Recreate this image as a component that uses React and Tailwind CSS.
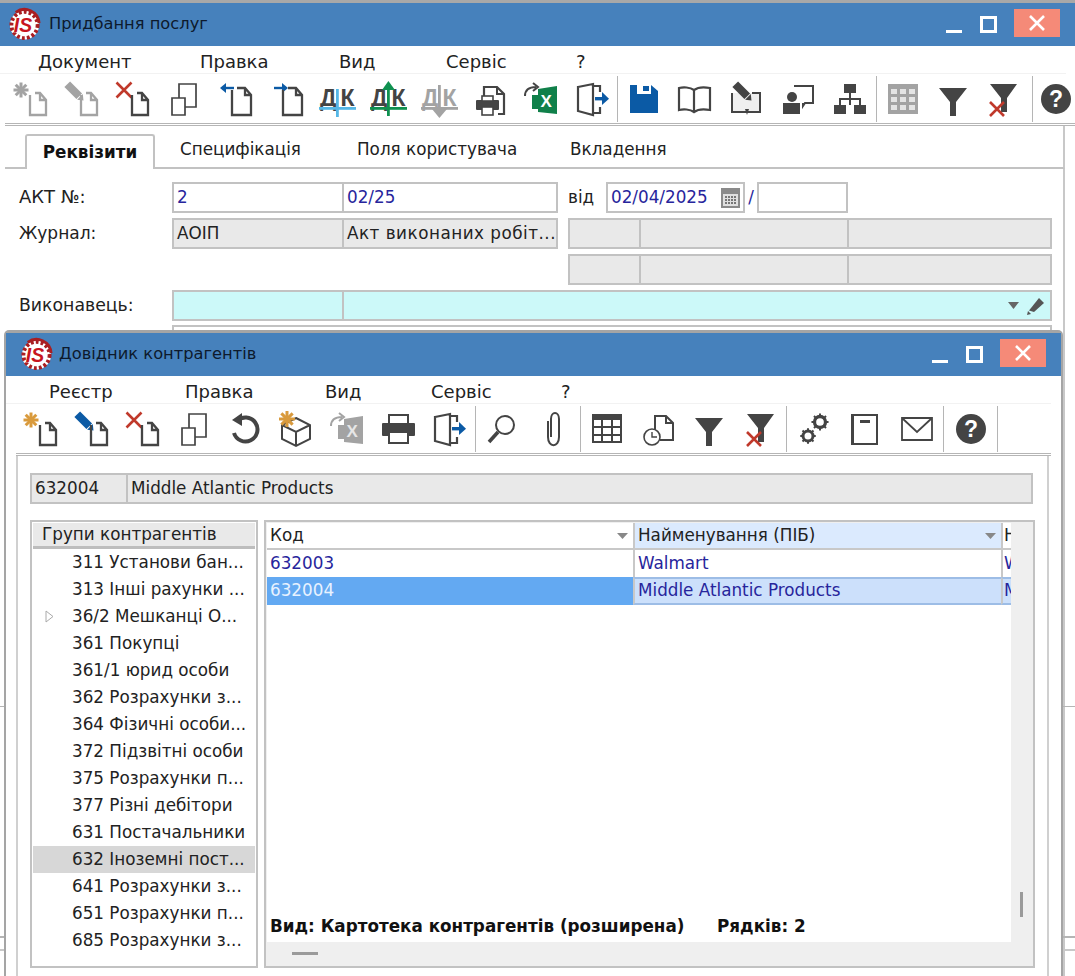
import React from "react";

const D = "#444";
const G = "#a3a3a3";
const R = "#c0392b";
const B = "#0b5aa5";
const O = "#d99a3c";

const Doc = ({ c = D, x = 19, y = 14, w = 16, h = 22 }) => (
  <path d={`M${x} ${y + 2}V${y + h}H${x + w}V${y + 7}L${x + w - 6} ${y}H${x + 5}M${x + w - 6} ${y}V${y + 7}H${x + w}`} fill="none" stroke={c} strokeWidth="2.3" />
);
const Star = ({ c, x = 10, y = 11, r = 7.5, sw = 3 }) => (
  <g stroke={c} strokeWidth={sw}>
    {[0, 45, 90, 135].map((a) => (
      <line key={a} x1={x - r} y1={y} x2={x + r} y2={y} transform={`rotate(${a} ${x} ${y})`} />
    ))}
  </g>
);
const Pencil = ({ c, x = 13, y = 13 }) => (
  <g transform={`rotate(45 ${x} ${y})`}>
    <rect x={x - 11} y={y - 4} width="17" height="8" fill={c} />
    <path d={`M${x + 7} ${y - 4}L${x + 12} ${y}L${x + 7} ${y + 4}Z`} fill={c} />
  </g>
);
const Cross = ({ x = 11, y = 11, r = 7.5, c = R }) => (
  <path d={`M${x - r} ${y - r}L${x + r} ${y + r}M${x + r} ${y - r}L${x - r} ${y + r}`} stroke={c} strokeWidth="2.6" fill="none" />
);
const Copy = () => (
  <path d="M8 19H21V36H8ZM15 19V5H32V28H21" fill="none" stroke={D} strokeWidth="1.7" />
);
const ArrowH = ({ x, y, dir }) => (
  <g fill={B}>
    <rect x={dir < 0 ? x : x - 9} y={y - 1.2} width="9" height="2.4" />
    <path d={dir < 0 ? `M${x - 5} ${y}L${x + 1} ${y - 5}V${y + 5}Z` : `M${x + 5} ${y}L${x - 1} ${y - 5}V${y + 5}Z`} />
  </g>
);
const DK = ({ c, up, down }) => (
  <g>
    <text x="3" y="27" fontSize="23" fontWeight="700" fontFamily="'Liberation Sans',sans-serif" fill={down ? c : D}>Д</text>
    <text x="23.500" y="27" fontSize="23" fontWeight="700" fontFamily="'Liberation Sans',sans-serif" fill={down ? c : D}>К</text>
    <rect x="19" y={up || down ? 6 : 10} width="2.8" height={up || down ? 31 : 28} fill={c} />
    <rect x="2" y="28" width="37" height="2.8" fill={c} />
    {up && <path d="M20.400 2L14 11H27Z" fill={c} />}
    {down && <path d="M20.400 39L13 30H28Z" fill={c} />}
  </g>
);
const PrintSmall = () => (
  <g>
    <path d="M14 17V8H27L34 15V35H28" fill="none" stroke={D} strokeWidth="2.2" />
    <path d="M27 8V15H34" fill="none" stroke={D} strokeWidth="2" />
    <rect x="6" y="21" width="23" height="10" rx="1" fill={D} />
    <rect x="12" y="17" width="11" height="5" fill="#fff" stroke={D} strokeWidth="1.6" />
    <rect x="12" y="28" width="11" height="8" fill="#fff" stroke={D} strokeWidth="1.6" />
  </g>
);
const Excel = ({ gray }) => (
  <g>
    <path d="M4 17C4 10 9 8 15 8M12 4L17 8L12 12" fill="none" stroke={gray ? G : D} strokeWidth="2" />
    <path d="M11 16H17V10L36 7V35L17 33V30H11Z" fill={gray ? G : "#10804a"} />
    <text x="19.500" y="28" fontSize="17" fontWeight="700" fontFamily="'Liberation Sans',sans-serif" fill={gray ? "#e6e6e6" : "#fff"}>X</text>
  </g>
);
const DoorOut = () => (
  <g>
    <path d="M6 8L21 5V36L6 32ZM21 7H28V13M28 28V34H21" fill="none" stroke={D} strokeWidth="2.2" />
    <rect x="23" y="18" width="8" height="3.4" fill={B} />
    <path d="M37 19.700L30 13V26Z" fill={B} />
  </g>
);
const Funnel = () => <path d="M6 9H34L23 23V37H17V23Z" fill={D} />;
const FunnelX = () => (
  <g>
    <path d="M7 5H34L24 19V33H18V19Z" fill={D} />
    <Cross x={14} y={30} r={7} />
  </g>
);
const Help = () => (
  <g>
    <circle cx="20" cy="20" r="15" fill={D} />
    <text x="20" y="28" textAnchor="middle" fontSize="23" fontWeight="700" fontFamily="'Liberation Sans',sans-serif" fill="#fff">?</text>
  </g>
);
const Grid3 = ({ c, fill }) => (
  <g>
    <rect x="6" y="6" width="28" height="27" fill={fill || "#fff"} stroke={c} strokeWidth="2" />
    <rect x="6" y="6" width="28" height="5" fill={c} />
    {[14, 24].map((x) => <rect key={x} x={x} y="6" width="2" height="27" fill={c} />)}
    {[17, 25].map((y) => <rect key={y} x="6" y={y} width="28" height="2" fill={c} />)}
  </g>
);

const S = ({ children }) => (
  <svg width="40" height="40" viewBox="0 0 40 40" className="shrink-0">{children}</svg>
);

const icons1 = [
  <S><Star c={G} /><Doc c={G} /></S>,
  <S><Pencil c={G} /><Doc c={G} /></S>,
  <S><Cross /><Doc /></S>,
  <S><Copy /></S>,
  <S><ArrowH x={10} y={9} dir={-1} /><Doc x={17} y={9} h={27} w={19} /></S>,
  <S><ArrowH x={17} y={9} dir={1} /><Doc x={17} y={9} h={27} w={19} /></S>,
  <S><DK c="#55b7e6" /></S>,
  <S><DK c="#0f9150" up /></S>,
  <S><DK c={G} down /></S>,
  <S><PrintSmall /></S>,
  <S><Excel /></S>,
  <S><DoorOut /></S>,
];
const icons1b = [
  <S>
    <path d="M7 6H28L35 12V34H7Z" fill={B} />
    <rect x="14" y="6" width="14" height="9" fill="#fff" />
    <rect x="20" y="7" width="6" height="5" fill={B} />
  </S>,
  <S><path d="M20 11C16 8 9 8 5 9V31C9 30 16 30 20 33C24 30 31 30 36 31V9C31 8 24 8 20 11ZM20 11V33" fill="none" stroke={D} strokeWidth="2.2" /></S>,
  <S><path d="M6 14V33H34V14H26" fill="#efefef" stroke={D} strokeWidth="2" /><Pencil c={D} x={17} y={13} /><path d="M19 30H23L21 36Z" fill={D} /></S>,
  <S><path d="M16 7H35V24H27L25 27V24" fill="none" stroke={D} strokeWidth="2" /><circle cx="14" cy="18" r="5" fill={D} /><path d="M5 24H22V35H5Z" fill={D} /></S>,
  <S><rect x="14" y="5" width="12" height="9" fill={D} /><rect x="4" y="26" width="12" height="9" fill={D} /><rect x="24" y="26" width="12" height="9" fill={D} /><path d="M20 14V26M10 26V20H30V26" fill="none" stroke={D} strokeWidth="2" /></S>,
];
const icons1c = [
  <S><rect x="5" y="5" width="30" height="30" fill={G} />{[8, 17, 26].map((x) => [12, 20, 28].map((y) => <rect key={`${x}${y}`} x={x} y={y - 2} width="6" height="5" fill="#e4e4e4" />))}</S>,
  <S><Funnel /></S>,
  <S><FunnelX /></S>,
];

const icons2 = [
  <S><Star c={O} /><Doc /></S>,
  <S><Pencil c={B} /><Doc /></S>,
  <S><Cross /><Doc /></S>,
  <S><Copy /></S>,
  <S><path d="M12 12A12 12 0 1 1 9 24" fill="none" stroke={D} strokeWidth="4" /><path d="M17 4V17L7 11Z" fill={D} /></S>,
  <S><path d="M20 9L34 16V30L20 37L6 30V16ZM6 16L20 23L34 16M20 23V37" fill="#fff" stroke={D} strokeWidth="2" /><Star c={O} x={11} y={10} r={8} /></S>,
  <S><Excel gray /></S>,
  <S><rect x="11" y="6" width="19" height="9" fill="#fff" stroke={D} strokeWidth="2" /><rect x="4" y="14" width="33" height="13" rx="1" fill={D} /><rect x="11" y="23" width="19" height="11" fill="#fff" stroke={D} strokeWidth="2" /></S>,
  <S><DoorOut /></S>,
];
const icons2b = [
  <S><circle cx="23" cy="16" r="9" fill="none" stroke={D} strokeWidth="2" /><path d="M16 23L7 33" stroke={D} strokeWidth="3.6" /></S>,
  <S><path d="M14 11V27C14 38 25 38 25 27V9C25 1 17 1 17 9V27" fill="none" stroke={D} strokeWidth="2" transform="translate(0 1)" /></S>,
];
const icons2c = [
  <S><Grid3 c={D} /></S>,
  <S><path d="M17 21V7H28L35 14V31H22" fill="none" stroke={D} strokeWidth="2" /><path d="M28 7V14H35" fill="none" stroke={D} strokeWidth="2" /><circle cx="14" cy="28" r="8" fill="#fff" stroke={D} strokeWidth="1.6" /><path d="M14 23V28H19" fill="none" stroke={D} strokeWidth="1.4" /></S>,
  <S><Funnel /></S>,
  <S><FunnelX /></S>,
];
const Gear = ({ x, y, r }) => (
  <g>
    <circle cx={x} cy={y} r={r} fill="none" stroke={D} strokeWidth={r * 0.6} />
    {[0, 45, 90, 135].map((a) => (
      <line key={a} x1={x - r * 1.55} y1={y} x2={x + r * 1.55} y2={y} stroke={D} strokeWidth="2" strokeDasharray={`${r * 0.75} ${r * 1.6}`} transform={`rotate(${a} ${x} ${y})`} />
    ))}
  </g>
);
const icons2d = [
  <S><Gear x={15} y={27} r={5} /><Gear x={27} y={13} r={5.5} /></S>,
  <S><rect x="7" y="6" width="25" height="29" fill="none" stroke={D} strokeWidth="2" /><rect x="6" y="6" width="3" height="29" fill={D} /><rect x="15" y="11" width="10" height="3" fill={D} /></S>,
  <S><path d="M5 9H35V31H5ZM5 9L20 23L35 9" fill="none" stroke={D} strokeWidth="1.8" /></S>,
];

const Sep = () => <div className="w-px h-[46px] bg-[#b5b5b5] shrink-0" />;
const Cell = ({ children, w = "w-[51px]" }) => (
  <div className={`${w} shrink-0 flex items-center justify-center`}>{children}</div>
);

const Logo = () => (
  <svg width="33" height="38" viewBox="0 0 34 38" className="shrink-0">
    <circle cx="17" cy="19" r="15" fill="#fff" />
    <circle cx="17" cy="19" r="13.500" fill="none" stroke="#a91e22" strokeWidth="4" strokeDasharray="3 2.200" />
    <path d="M8 6A15 15 0 0 1 32 17" fill="none" stroke="#a91e22" strokeWidth="3" />
    <text x="6" y="26" fontSize="20" fontWeight="700" fontStyle="italic" fontFamily="'Liberation Sans',sans-serif" fill="#c8141e" stroke="#fff" strokeWidth="0.6" paintOrder="stroke">IS</text>
  </svg>
);

const TitleBar = ({ title, btnGap, pad, gap }) => (
  <div className={`h-[43px] bg-[#4681bc] flex items-center shrink-0 ${pad}`}>
    <Logo />
    <span className={`text-[16.3px] text-[#0d1a2d] ${gap}`}>{title}</span>
    <div className="ml-auto flex items-center">
      <div className="w-4 h-[3px] bg-white mt-[13px]" />
      <div className="w-[17px] h-[17px] border-[3px] border-white ml-[18px]" />
      <div className="w-[46px] h-[28px] bg-[#f58a78] ml-[17px] mb-[3px] flex items-center justify-center">
        <svg width="16" height="16" viewBox="0 0 16 16"><path d="M1 1L15 15M15 1L1 15" stroke="#fff" strokeWidth="2.6" /></svg>
      </div>
      <div className={btnGap} />
    </div>
  </div>
);

const Field = ({ w, bg = "bg-white", children, grow, cls = "" }) => (
  <div className={`${w || ""} ${grow ? "grow" : ""} h-[31px] ${bg} border-2 border-[#c2c2c2] -ml-0.5 first:ml-0 flex items-center pl-[3px] overflow-hidden whitespace-nowrap ${cls}`}>
    {children}
  </div>
);

const groups = [
  "311 Установи бан...",
  "313 Інші рахунки ...",
  "36/2 Мешканці О...",
  "361 Покупці",
  "361/1 юрид особи",
  "362 Розрахунки з...",
  "364 Фізичні особи...",
  "372 Підзвітні особи",
  "375 Розрахунки п...",
  "377 Різні дебітори",
  "631 Постачальники",
  "632 Іноземні пост...",
  "641 Розрахунки з...",
  "651 Розрахунки п...",
  "685 Розрахунки з...",
];

const blue = "text-[#27259c]";

export default function App() {
  return (
    <div className="relative w-[1075px] h-[976px] overflow-hidden bg-white text-[16.8px] text-[#222] font-['DejaVu_Sans',sans-serif]">
      {/* main window */}
      <div className="flex flex-col h-full border-t-[3px] border-[#a8a8a8]">
        <TitleBar title="Придбання послуг" btnGap="w-[15px]" pad="pl-[8px]" gap="ml-[8px]" />
        <div className="h-[28px] pt-[3px] flex items-center pl-[38px] mr-[9px] shrink-0 border-b border-[#f2f2f2] text-[18px]">
          <span className="w-[162px]">Документ</span>
          <span className="w-[139px]">Правка</span>
          <span className="w-[107px]">Вид</span>
          <span className="w-[130px]">Сервіс</span>
          <span>?</span>
        </div>
        <div className="h-[49px] flex items-center pl-[5px] shrink-0">
          {icons1.map((ic, i) => <Cell key={i}>{ic}</Cell>)}
          <Sep />
          <Cell w="w-[50px]">{icons1b[0]}</Cell>
          {icons1b.slice(1).map((ic, i) => <Cell key={i} w="w-[52px]">{ic}</Cell>)}
          <Sep />
          <Cell>{icons1c[0]}</Cell>
          <Cell w="w-[50px]">{icons1c[1]}</Cell>
          <Cell w="w-[50px]">{icons1c[2]}</Cell>
          <div className="w-[4px] shrink-0" />
          <Sep />
          <Cell w="w-[46px]"><S><Help /></S></Cell>
        </div>
        <div className="h-[3px] ml-[5px] border-y border-[#b5b5b5] shrink-0" />
        {/* tabs */}
        <div className="ml-[5px] mr-[10px] h-[43px] flex items-end border-r-2 border-[#c8c8c8] shrink-0 border-b-2 border-b-[#c2c2c2]">
          <div className="ml-5 w-[130px] h-[35px] border-2 border-b-0 border-[#c2c2c2] rounded-t-[3px] bg-white -mb-[2px] flex items-center justify-center font-bold text-[#111]">
            Реквізити
          </div>
          <div className="h-[35px] flex items-center pl-[25px]">
            <span className="w-[177px]">Специфікація</span>
            <span className="w-[213px]">Поля користувача</span>
            <span>Вкладення</span>
          </div>
        </div>
        {/* form */}
        <div className="ml-[5px] mr-[10px] grow border-r-2 border-[#c8c8c8] pt-[13px] pl-[14px] pr-[11px] flex flex-col gap-[5px]">
          <div className="flex items-start">
            <span className="w-[155px] leading-[30px] text-[18px]">АКТ №:</span>
            <Field w="w-[172px]"><span className={blue}>2</span></Field>
            <Field w="w-[216px]"><span className={blue}>02/25</span></Field>
            <span className="ml-[10px] w-[40px] leading-[31px]">від</span>
            <Field w="w-[139px]" cls="justify-between pr-[3px]">
              <span className={blue}>02/04/2025</span>
              <svg width="19" height="20" viewBox="0 0 19 20" className="shrink-0">
                <rect width="19" height="20" fill="#8a8a8a" />
                <rect x="2" y="6" width="15" height="12" fill="#e0e0e0" />
                {[4, 7, 10, 13].map((x) => [8, 11, 14].map((y) => <rect key={`${x}-${y}`} x={x} y={y} width="2" height="2" fill="#777" />))}
              </svg>
            </Field>
            <span className={`w-[14px] pr-[2px] text-center leading-[31px] ${blue}`}>/</span>
            <Field w="w-[91px]" />
          </div>
          <div className="flex items-start">
            <span className="w-[155px] leading-[30px] text-[17px]">Журнал:</span>
            <Field w="w-[172px]" bg="bg-[#e9e9e9]">АОІП</Field>
            <Field w="w-[216px]" bg="bg-[#e9e9e9]"><span className="tracking-[0.5px]">Акт виконаних робіт...</span></Field>
            <div className="ml-[10px] grow flex">
              <Field w="w-[73px]" bg="bg-[#e9e9e9]" />
              <Field w="w-[210px]" bg="bg-[#e9e9e9]" />
              <Field grow bg="bg-[#e9e9e9]" />
            </div>
          </div>
          <div className="flex items-start">
            <div className="w-[549px] shrink-0" />
            <div className="grow flex">
              <Field w="w-[73px]" bg="bg-[#e9e9e9]" />
              <Field w="w-[210px]" bg="bg-[#e9e9e9]" />
              <Field grow bg="bg-[#e9e9e9]" />
            </div>
          </div>
          <div className="flex items-start">
            <span className="w-[155px] leading-[30px] text-[17.3px]">Виконавець:</span>
            <Field w="w-[172px]" bg="bg-[#ccf9f9]" />
            <Field grow bg="bg-[#ccf9f9]" cls="justify-end pr-[5px] gap-[8px]">
              <svg width="11" height="7" viewBox="0 0 11 7"><path d="M0 0H11L5.500 7Z" fill="#666" /></svg>
              <svg width="18" height="18" viewBox="0 0 18 18"><path d="M12 1L17 6L7 15L2 13.500Z" fill="#555" /><path d="M1 14L4 17L0 18Z" fill="#555" /></svg>
            </Field>
          </div>
          <div className="ml-[153px] h-[31px] border-2 border-[#c2c2c2] -mt-px" />
        </div>
      </div>
      <div className="absolute left-0 right-0 top-[706px] h-px bg-[#b5b5b5]" />
      <div className="absolute left-0 right-0 top-[936px] h-[2px] bg-[#b5b5b5]" />
      <div className="absolute left-0 right-0 top-[949px] h-[2px] bg-[#c8c8c8]" />

      {/* dialog */}
      <div className="absolute left-[4px] top-[330px] w-[1059px] h-[660px] bg-white border-x-[2px] border-t-[3px] border-[#a5a5a5] rounded-t-[5px] flex flex-col">
        <TitleBar title="Довідник контрагентів" btnGap="w-[15px]" pad="pl-[14px]" gap="ml-[6px]" />
        <div className="h-[28px] pt-[3px] flex items-center pl-[43px] mr-[10px] shrink-0 border-b border-[#f2f2f2] text-[18px]">
          <span className="w-[136px]">Реєстр</span>
          <span className="w-[140px]">Правка</span>
          <span className="w-[106px]">Вид</span>
          <span className="w-[130px]">Сервіс</span>
          <span>?</span>
        </div>
        <div className="h-[49px] flex items-center pl-[9px] shrink-0">
          {icons2.map((ic, i) => <Cell key={i}>{ic}</Cell>)}
          <div className="w-px shrink-0" />
          <Sep />
          {icons2b.map((ic, i) => <Cell key={i} w="w-[52px]">{ic}</Cell>)}
          <Sep />
          {icons2c.map((ic, i) => <Cell key={i}>{ic}</Cell>)}
          <div className="w-px shrink-0" />
          <Sep />
          {icons2d.map((ic, i) => <Cell key={i} w="w-[52px]">{ic}</Cell>)}
          <Sep />
          <Cell w="w-[53px]"><S><Help /></S></Cell>
          <Sep />
        </div>
        <div className="h-[3px] mr-[10px] ml-[10px] border-y border-[#b5b5b5] shrink-0" />
        <div className="mx-[10px] mr-[12px] border-x-2 border-[#d0d0d0] grow pl-[12px] pr-[12px] pt-[17px]">
          <div className="flex mr-[2px]">
            <Field w="w-[98px]" bg="bg-[#e9e9e9]">632004</Field>
            <Field grow bg="bg-[#e9e9e9]">Middle Atlantic Products</Field>
          </div>
          <div className="flex mt-[16px] gap-[6px] h-[448px]">
            <div className="w-[228px] shrink-0 border-2 border-[#c2c2c2] p-px">
              <div className="h-[26px] bg-[#e9e9e9] border-b-[3px] border-[#bdbdbd] flex items-center pl-[9px]">Групи контрагентів</div>
              <div className="flex flex-col">
                {groups.map((g, i) => (
                  <div key={g} className={`h-[27px] flex items-center pl-[39px] relative whitespace-nowrap ${i === 11 ? "bg-[#d7d7d7]" : ""}`}>
                    {i === 2 && (
                      <svg className="absolute left-[12px] top-[7px]" width="9" height="13" viewBox="0 0 9 13"><path d="M1 1L8 6.500L1 12Z" fill="none" stroke="#aaa" /></svg>
                    )}
                    {g}
                  </div>
                ))}
              </div>
            </div>
            <div className="grow border-2 border-[#c2c2c2] p-px flex flex-col bg-[#efefef] min-w-0">
              <div className="flex grow min-h-0">
                <div className="w-[744px] bg-white flex flex-col overflow-hidden">
                  <div className="flex h-[27px] border-b-2 border-[#c8c8c8] shrink-0 whitespace-nowrap">
                    <div className="w-[366px] flex items-center justify-between pl-[3px] pr-[5px] shrink-0">
                      Код
                      <svg width="11" height="6" viewBox="0 0 11 6"><path d="M0 0H11L5.500 6Z" fill="#888" /></svg>
                    </div>
                    <div className="w-[368px] bg-[#dbeafe] border-l-2 border-[#c8c8c8] flex items-center justify-between pl-[3px] pr-[5px] shrink-0">
                      Найменування (ПІБ)
                      <svg width="11" height="6" viewBox="0 0 11 6"><path d="M0 0H11L5.500 6Z" fill="#888" /></svg>
                    </div>
                    <div className="w-[10px] border-l-2 border-[#c8c8c8] pl-[1px] overflow-hidden shrink-0">Н</div>
                  </div>
                  <div className={`flex h-[27px] shrink-0 whitespace-nowrap ${blue}`}>
                    <div className="w-[366px] flex items-center pl-[3px] shrink-0">632003</div>
                    <div className="w-[368px] border-l-2 border-[#c8c8c8] flex items-center pl-[3px] shrink-0">Walmart</div>
                    <div className="w-[10px] border-l-2 border-[#c8c8c8] pl-[1px] overflow-hidden shrink-0 flex items-center">W</div>
                  </div>
                  <div className={`flex h-[28px] shrink-0 whitespace-nowrap ${blue}`}>
                    <div className="w-[366px] bg-[#63a9f2] text-[#e8f2ff] flex items-center pl-[3px] shrink-0">632004</div>
                    <div className="w-[368px] bg-[#cce0fb] border-y-2 border-y-[#9dbde6] border-l-2 border-l-[#c8c8c8] flex items-center pl-[3px] shrink-0">Middle Atlantic Products</div>
                    <div className="w-[10px] bg-[#cce0fb] border-y-2 border-y-[#9dbde6] border-l-2 border-l-[#c8c8c8] pl-[1px] overflow-hidden shrink-0 flex items-center">M</div>
                  </div>
                  <div className="mt-auto h-[30px] flex items-center pl-[3px] font-bold text-[#111] whitespace-nowrap">
                    <span className="w-[447px]">Вид: Картотека контрагентів (розширена)</span>
                    <span>Рядків: 2</span>
                  </div>
                </div>
                <div className="grow flex flex-col items-center justify-end pb-[25px]">
                  <div className="w-[3px] h-[25px] bg-[#9a9a9a]" />
                </div>
              </div>
              <div className="h-[23px] shrink-0 flex items-center pl-[25px]">
                <div className="w-[26px] h-[3px] bg-[#9a9a9a]" />
              </div>
            </div>
          </div>
        </div>
      </div>
    </div>
  );
}
